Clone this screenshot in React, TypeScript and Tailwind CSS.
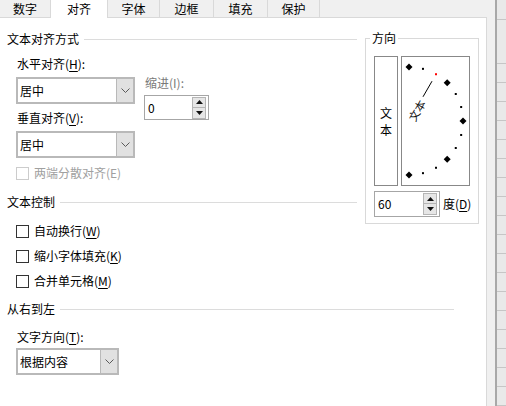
import React from "react";

function Chevron() {
  return (
    <svg width="9" height="5" viewBox="0 0 9 5" className="block">
      <polyline points="0.5,0.5 4.5,4.5 8.5,0.5" fill="none" stroke="#5a5a5a" strokeWidth="1" />
    </svg>
  );
}

function Combo({ className, value }: { className: string; value: string }) {
  return (
    <div className={"flex h-[27px] border-2 border-[#b9b9b9] bg-white " + className}>
      <div className="flex-1 flex items-center pl-[2px]">{value}</div>
      <div className="w-[17px] bg-[#e1e1e1] border-l border-[#b9b9b9] flex items-center justify-center">
        <Chevron />
      </div>
    </div>
  );
}

function Tri({ up }: { up: boolean }) {
  return (
    <svg width="7" height="4" viewBox="0 0 7 4" className="block">
      {up ? <polygon points="0,4 7,4 3.5,0" fill="#111" /> : <polygon points="0,0 7,0 3.5,4" fill="#111" />}
    </svg>
  );
}

function Spin({ className, value }: { className: string; value: string }) {
  return (
    <div className={"flex border border-[#a6a6a6] bg-white " + className}>
      <div className="flex-1 flex items-center pl-[3px]">{value}</div>
      <div className="flex flex-col justify-center pr-[2px]">
        <div className="w-[14px] h-[11px] bg-[#e6e6e6] border border-[#b5b5b5] flex items-center justify-center">
          <Tri up />
        </div>
        <div className="w-[14px] h-[11px] bg-[#e6e6e6] border border-[#b5b5b5] border-t-0 flex items-center justify-center">
          <Tri up={false} />
        </div>
      </div>
    </div>
  );
}

function Header({ title }: { title: string }) {
  return (
    <div className="flex items-center h-4">
      <span>{title}</span>
      <div className="flex-1 h-px bg-[#dcdcdc] ml-[5px]" />
    </div>
  );
}

function Check({ label, disabled }: { label: React.ReactNode; disabled?: boolean }) {
  return (
    <div className={"flex items-center h-4 ml-[16px] " + (disabled ? "text-[#a0a0a0]" : "")}>
      <div
        className={
          "w-[13px] h-[13px] border bg-white " + (disabled ? "border-[#cccccc]" : "border-[#333333]")
        }
      />
      <span className="ml-[5px]">{label}</span>
    </div>
  );
}

function U({ c }: { c: string }) {
  return <span className="underline underline-offset-2">{c}</span>;
}

function Dial() {
  const cx = 7;
  const cy = 64;
  const r = 54;
  const items: React.ReactNode[] = [];
  for (let a = 90; a >= -90; a -= 15) {
    const rad = (a * Math.PI) / 180;
    const x = cx + r * Math.cos(rad);
    const y = cy - r * Math.sin(rad);
    if (a % 45 === 0) {
      items.push(
        <polygon
          key={a}
          points={`${x},${y - 3.5} ${x + 3.5},${y} ${x},${y + 3.5} ${x - 3.5},${y}`}
          fill="#000"
        />
      );
    } else {
      items.push(
        <rect key={a} x={x - 1} y={y - 1} width="2" height="2" fill={a === 60 ? "#ff0000" : "#000"} />
      );
    }
  }
  return (
    <svg width="67" height="128" viewBox="0 0 67 128" className="block">
      {items}
      <line x1={21} y1={39.8} x2={30} y2={24.2} stroke="#000" strokeWidth="1" />
      <text
        x={cx + 2}
        y={cy + 1}
        transform={`rotate(-60 ${cx} ${cy})`}
        fontSize="11"
        dominantBaseline="central"
        fill="#111"
        fontFamily='"Noto Sans CJK SC", sans-serif'
      >
        文本
      </text>
    </svg>
  );
}

export default function App() {
  const rows = Array.from({ length: 18 });
  return (
    <div className="w-[506px] h-[406px] flex bg-[#f0f0f0] text-[12px] leading-4 text-black font-['Noto_Sans_CJK_SC',sans-serif] overflow-hidden">
      <div className="w-[487px] flex flex-col">
        {/* Tabs */}
        <div className="h-[18px] flex">
          <div className="w-[50px] border-b border-[#d9d9d9] flex items-center justify-center">数字</div>
          <div className="w-[58px] bg-white border-l border-r border-[#d9d9d9] flex items-center justify-center">
            对齐
          </div>
          <div className="w-[52px] border-r border-b border-[#d9d9d9] flex items-center justify-center">字体</div>
          <div className="w-[54px] border-r border-b border-[#d9d9d9] flex items-center justify-center">边框</div>
          <div className="w-[54px] border-r border-b border-[#d9d9d9] flex items-center justify-center">填充</div>
          <div className="w-[52px] border-r border-b border-[#d9d9d9] flex items-center justify-center">保护</div>
          <div className="flex-1 border-b border-[#d9d9d9]" />
        </div>
        {/* Panel */}
        <div className="flex-1 bg-white border-r border-[#d9d9d9] flex flex-col">
          <div className="flex items-start">
            <div className="w-[365px] pl-[7px] pr-[8px] flex flex-col">
              <div className="mt-[13px]">
                <Header title="文本对齐方式" />
              </div>
              <div className="flex pl-[9px]">
                <div className="w-[119px] flex flex-col">
                  <div className="mt-[9px] pl-[1px]">
                    水平对齐(<U c="H" />):
                  </div>
                  <Combo className="mt-[5px] w-[119px]" value="居中" />
                  <div className="mt-[6px] pl-[1px]">
                    垂直对齐(<U c="V" />):
                  </div>
                  <Combo className="mt-[5px] w-[119px] h-[26px]" value="居中" />
                  <div className="mt-[7px] -ml-[16px]">
                    <Check disabled label={<>两端分散对齐(E)</>} />
                  </div>
                </div>
                <div className="ml-[9px] flex flex-col">
                  <div className="mt-[28px] pl-[1px] text-[#7a7a7a]">缩进(I):</div>
                  <Spin className="mt-[4px] h-[25px] w-[65px]" value="0" />
                </div>
              </div>
              <div className="mt-[13px]">
                <Header title="文本控制" />
              </div>
              <div className="mt-[13px] -ml-[7px]">
                <Check
                  label={
                    <>
                      自动换行(<U c="W" />)
                    </>
                  }
                />
              </div>
              <div className="mt-[9px] -ml-[7px]">
                <Check
                  label={
                    <>
                      缩小字体填充(<U c="K" />)
                    </>
                  }
                />
              </div>
              <div className="mt-[9px] -ml-[7px]">
                <Check
                  label={
                    <>
                      合并单元格(<U c="M" />)
                    </>
                  }
                />
              </div>
            </div>
            {/* Orientation */}
            <fieldset className="mt-[13px] w-[114px] border border-[#d9d9d9] px-0 pt-[11px] pb-[6px]">
              <legend className="ml-[4px] px-[2px] leading-[14px]">方向</legend>
              <div className="flex flex-col pl-[8px]">
                <div className="flex">
                  <div className="w-[24px] h-[130px] border border-[#888888] flex flex-col items-center justify-center leading-[17px]">
                    <span>文</span>
                    <span>本</span>
                  </div>
                  <div className="ml-[3px] w-[69px] h-[130px] border border-[#888888] bg-white">
                    <Dial />
                  </div>
                </div>
                <div className="flex items-center mt-[5px]">
                  <Spin className="h-[26px] w-[66px]" value="60" />
                  <span className="ml-[3px]">
                    度(<U c="D" />)
                  </span>
                </div>
              </div>
            </fieldset>
          </div>
          <div className="mt-[12px] pl-[7px] pr-[32px]">
            <Header title="从右到左" />
          </div>
          <div className="mt-[12px] ml-[17px]">
            文字方向(<U c="T" />):
          </div>
          <Combo className="mt-[3px] ml-[16px] w-[103px]" value="根据内容" />
        </div>
      </div>
      <div className="w-[8px]" />
      <div className="w-[11px] flex">
        <div className="w-[2px] bg-[#a8a8a8]" />
        <div className="flex-1 bg-[#e9e9e9] flex flex-col">
          <div className="h-[23px] border-b border-[#c6c6c6]" />
          <div className="h-[52px] border-b border-[#c6c6c6]" />
          {rows.map((_, i) => (
            <div key={i} className="h-[19px] shrink-0 border-b border-[#c6c6c6]" />
          ))}
        </div>
      </div>
    </div>
  );
}
